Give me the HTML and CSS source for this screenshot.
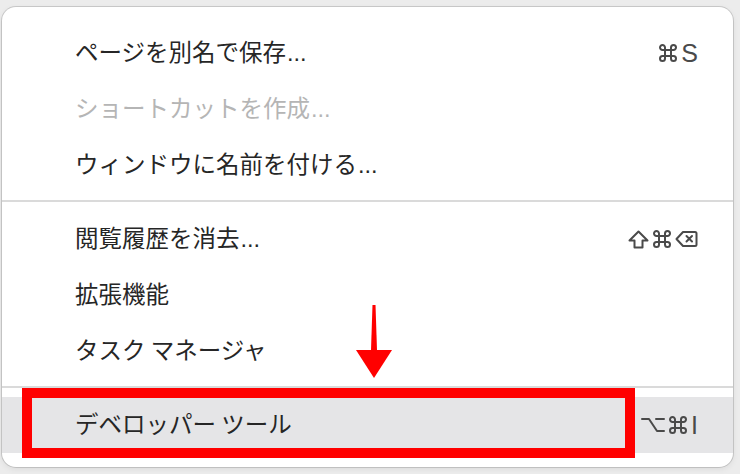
FILE: index.html
```html
<!DOCTYPE html>
<html lang="ja">
<head>
    <meta charset="UTF-8">
    <title>メニュー</title>
    <link rel="stylesheet" href="styles.css">
</head>
<body>
    <div class="menu">
        <div class="item">
            <span class="label">ページを別名で保存<span class="dots">...</span></span>
            <span class="key">
                <svg class="ico" width="20" height="20" viewBox="0 0 20 20"><path d="M7 7V4.5A2.5 2.5 0 1 0 4.5 7H15.5A2.5 2.5 0 1 0 13 4.5V15.5A2.5 2.5 0 1 0 15.5 13H4.5A2.5 2.5 0 1 0 7 15.5Z"/></svg>
                <span class="letter">S</span>
            </span>
        </div>
        <div class="item disabled"><span class="label">ショートカットを作成<span class="dots">...</span></span></div>
        <div class="item"><span class="label">ウィンドウに名前を付ける<span class="dots">...</span></span></div>
        <div class="sep"></div>
        <div class="item">
            <span class="label">閲覧履歴を消去<span class="dots">...</span></span>
            <span class="key">
                <svg class="ico" width="21" height="19" viewBox="0 0 21 19"><path d="M10.5 1.5L19.5 10.5H14.5V17.5H6.5V10.5H1.5Z"/></svg>
                <svg class="ico" width="20" height="20" viewBox="0 0 20 20"><path d="M7 7V4.5A2.5 2.5 0 1 0 4.5 7H15.5A2.5 2.5 0 1 0 13 4.5V15.5A2.5 2.5 0 1 0 15.5 13H4.5A2.5 2.5 0 1 0 7 15.5Z"/></svg>
                <svg class="ico" width="23" height="18" viewBox="0 0 23 18"><path d="M8 2H20A1.5 1.5 0 0 1 21.5 3.5V14.5A1.5 1.5 0 0 1 20 16H8L1.5 9Z"/><path d="M11.5 6L17 11.5M17 6L11.5 11.5"/></svg>
            </span>
        </div>
        <div class="item"><span class="label">拡張機能</span></div>
        <div class="item"><span class="label">タスク マネージャ</span></div>
        <div class="sep"></div>
        <div class="item active">
            <span class="label">デベロッパー ツール</span>
            <span class="key">
                <svg class="ico" width="24" height="18" viewBox="0 0 24 18"><path d="M1 3H8L16 15H23M15 3H23"/></svg>
                <svg class="ico" width="20" height="20" viewBox="0 0 20 20"><path d="M7 7V4.5A2.5 2.5 0 1 0 4.5 7H15.5A2.5 2.5 0 1 0 13 4.5V15.5A2.5 2.5 0 1 0 15.5 13H4.5A2.5 2.5 0 1 0 7 15.5Z"/></svg>
                <span class="letter">I</span>
            </span>
        </div>
    </div>

    <!-- annotation -->
    <svg class="arrow" width="40" height="78" viewBox="0 0 40 78">
        <polygon points="17.5,2 20.5,2 22,47 16,47" fill="#ff0000"/>
        <polygon points="1,47 37,47 19,75" fill="#ff0000"/>
    </svg>
    <div class="mark-box"></div>
</body>
</html>
```

FILE: styles.css
```css
body {
    margin: 0;
    background-color: #ececec;
    font-family: "Noto Sans CJK JP", "Liberation Sans", sans-serif;
    height: 474px;
    overflow: hidden;
}

.menu {
    margin: 7px 0 0 2px;
    width: 731px;
    height: 460px;
    box-sizing: border-box;
    padding: 18px 0 14px;
    background-color: #fff;
    border-radius: 14px;
    box-shadow: 0 0 0 1px rgba(0, 0, 0, 0.14), 0 2px 6px rgba(0, 0, 0, 0.08);
}

.item {
    height: 56px;
    display: flex;
    align-items: center;
    justify-content: space-between;
    padding: 0 35px 0 73px;
    font-size: 23.5px;
    color: #262626;
}

.label {
    position: relative;
    top: -2px;
}

.dots {
    font-family: "Liberation Sans", sans-serif;
    margin-left: 1px;
}

.item.disabled {
    color: #b5b5b5;
}

.item.active {
    background-color: #e5e5e7;
}

.key {
    display: flex;
    align-items: center;
    gap: 3px;
    color: #4a4a4a;
}

.ico {
    fill: none;
    stroke: #4a4a4a;
    stroke-width: 2;
    stroke-linejoin: round;
    stroke-linecap: round;
}

.letter {
    font-family: "Liberation Sans", sans-serif;
    font-size: 25px;
    line-height: 1;
}

.sep {
    height: 2px;
    margin: 7px 0 9px;
    background-color: #dadada;
}

.arrow {
    position: absolute;
    left: 355px;
    top: 303px;
}

.mark-box {
    position: absolute;
    left: 22px;
    top: 388px;
    width: 613px;
    height: 70px;
    box-sizing: border-box;
    border: 10px solid #ff0000;
}
```
